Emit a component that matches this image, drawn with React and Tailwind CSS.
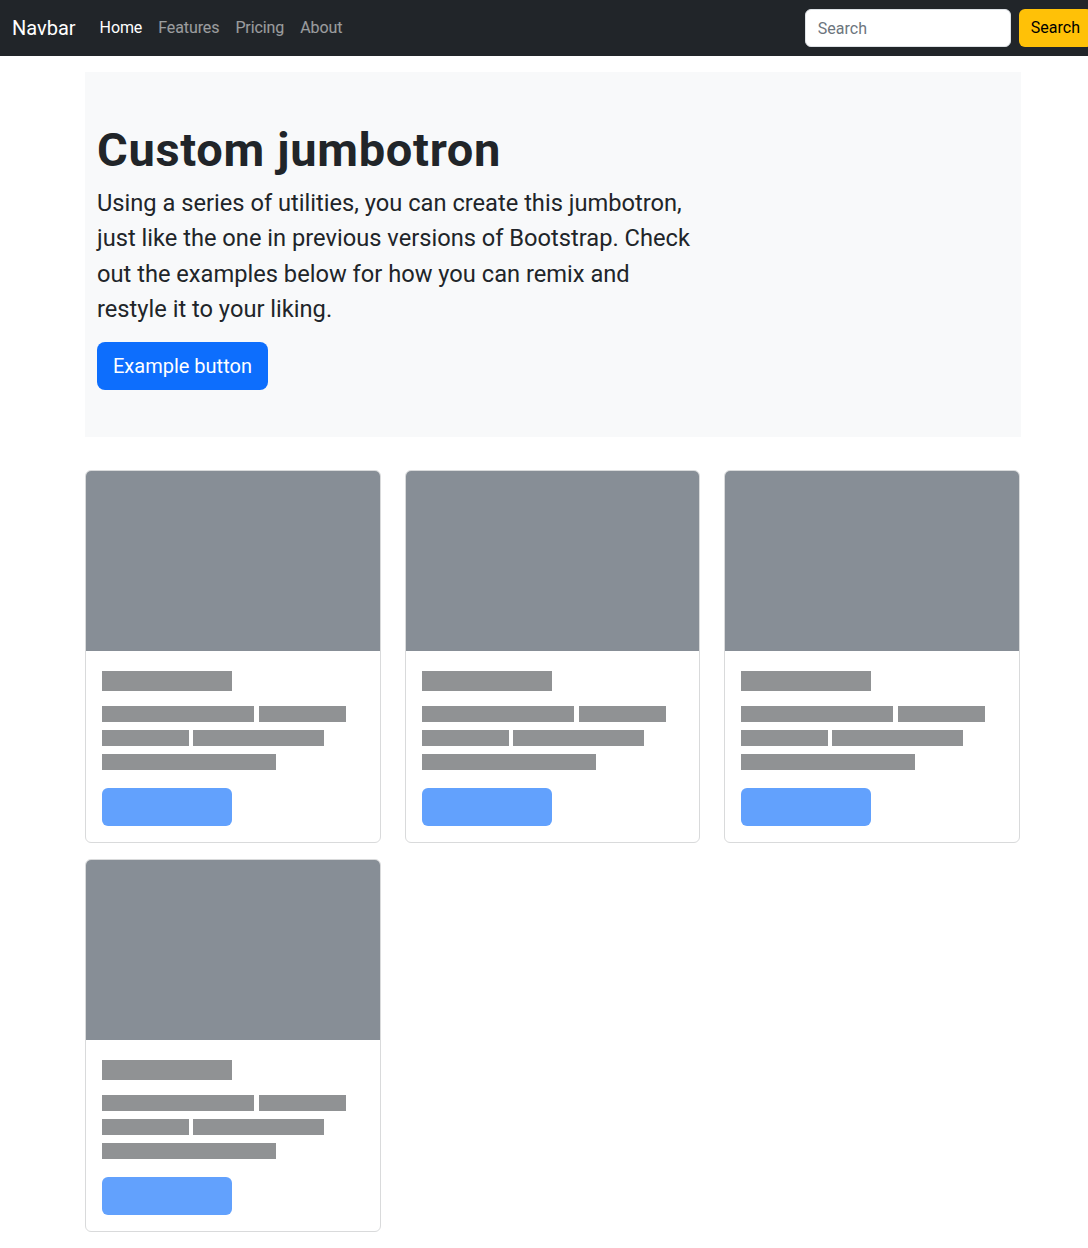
import React from 'react'

const font = { fontFamily: 'Roboto, "Liberation Sans", sans-serif' }

function Bar({ w, h = 'h-4' }) {
  return <span className={`block ${h} bg-[#909294] ${w}`} />
}

function PlaceholderCard() {
  return (
    <div className="rounded-md border border-[#d9dadb] overflow-hidden bg-white">
      <div className="h-[180px] bg-[#878e96]" />
      <div className="px-4 pt-[20px] pb-4">
        <Bar w="w-[130px]" h="h-5" />
        <div className="mt-[15px] flex flex-col gap-2">
          <div className="flex gap-[5px]">
            <Bar w="w-[152px]" />
            <Bar w="w-[87px]" />
          </div>
          <div className="flex gap-[4px]">
            <Bar w="w-[87px]" />
            <Bar w="w-[131px]" />
          </div>
          <div className="flex">
            <Bar w="w-[174px]" />
          </div>
        </div>
        <div className="mt-[18px] h-[38px] w-[130px] rounded-md bg-[#62a1fd]" />
      </div>
    </div>
  )
}

export default function App() {
  return (
    <div className="w-full overflow-hidden bg-white text-[#212529]" style={font}>
      <div className="w-[1104px]">
        {/* Navbar */}
        <nav className="h-14 bg-[#212529] px-3 flex items-center">
          <a className="text-xl text-white mr-4">Navbar</a>
          <ul className="flex items-center text-base tracking-[-0.1px]">
            <li className="px-2 text-white">Home</li>
            <li className="px-2 text-white/55">Features</li>
            <li className="px-2 text-white/55">Pricing</li>
            <li className="px-2 text-white/55">About</li>
          </ul>
          <div className="ml-auto flex items-center gap-2">
            <input
              placeholder="Search"
              className="w-[206px] h-[38px] rounded-md border border-[#dee2e6] bg-white px-3 text-base text-[#212529] placeholder:text-[#6c757d] outline-none"
              style={font}
            />
            <button className="h-[38px] rounded-md bg-[#ffc107] px-3 text-base text-black">Search</button>
          </div>
        </nav>

        <main className="w-[936px] ml-[85px]">
          {/* Jumbotron */}
          <section className="mt-4 bg-[#f8f9fa] px-3 pt-[51px] pb-[47px]">
            <h1 className="text-[47px] font-bold leading-[54.8px] tracking-[0.7px] mb-2">Custom jumbotron</h1>
            <p className="w-[600px] text-[23.66px] leading-[1.5] mb-[14px]">
              Using a series of utilities, you can create this jumbotron, just like the one in previous versions of Bootstrap. Check out the examples below for how you can remix and restyle it to your liking.
            </p>
            <button className="h-12 rounded-lg bg-[#0d6efd] px-4 text-xl text-white">Example button</button>
          </section>

          {/* Cards */}
          <div className="mt-[33px] grid grid-cols-[repeat(3,295.5px)] gap-x-6 gap-y-4 pb-8">
            <PlaceholderCard />
            <PlaceholderCard />
            <PlaceholderCard />
            <PlaceholderCard />
          </div>
        </main>
      </div>
    </div>
  )
}
